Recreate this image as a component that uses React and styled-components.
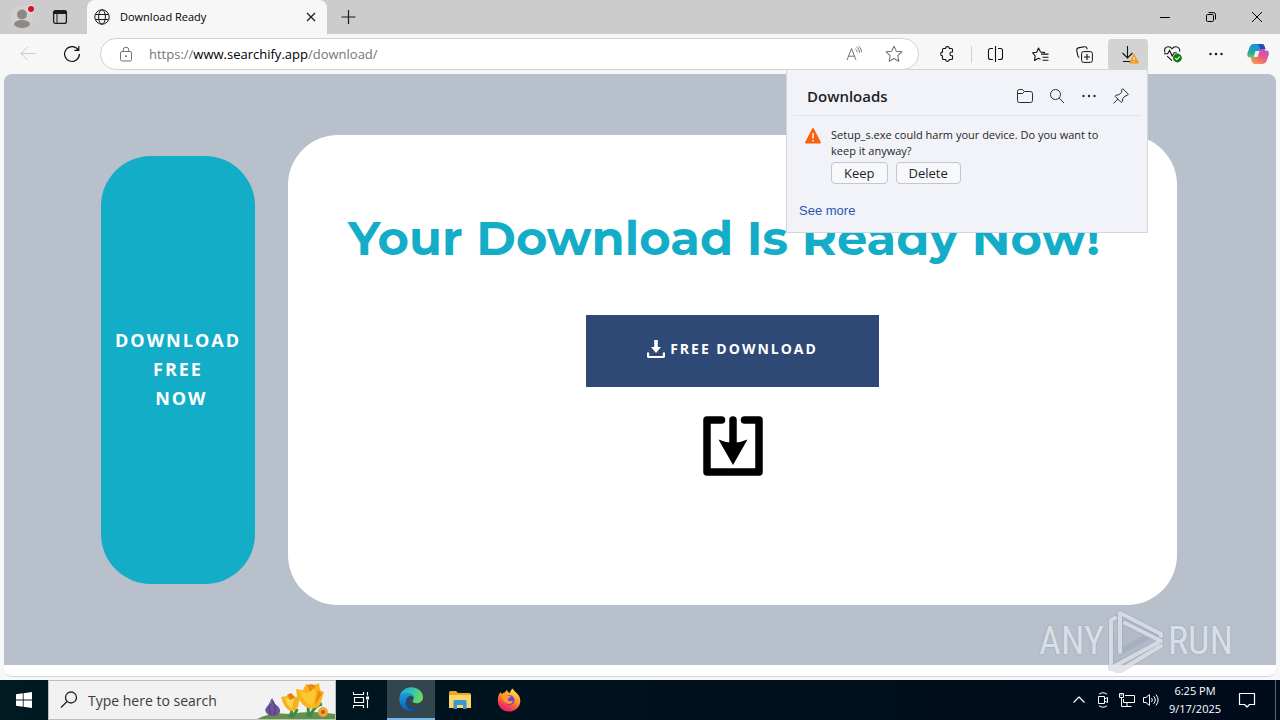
import React from "react";
import styled, { createGlobalStyle, css } from "styled-components";

const App = () => {
  return (
    <Desktop>
      <GlobalStyle />
      <TabStrip />
      <Toolbar />
      <Viewport>
        <DownloadPage />
        <Watermark />
      </Viewport>
      <Taskbar />
    </Desktop>
  );
};

//Tabs
const TabStrip = () => (
  <TabBar>
    <TabTool aria-label="Profile">
      <svg width="24" height="24" viewBox="0 0 24 24">
        <circle cx="12" cy="12" r="11" fill="#d3d1cf" />
        <circle cx="12" cy="9.500" r="5" fill="#8d8986" />
        <ellipse cx="12" cy="19" rx="8" ry="4" fill="#8d8986" />
        <circle cx="21" cy="4" r="4" fill="#e3dcdc" />
        <circle cx="21" cy="4" r="3" fill="#d50f25" />
      </svg>
    </TabTool>
    <TabTool aria-label="Workspaces">
      <Line viewBox="0 0 16 16" $size={16}>
        <rect x="1.600" y="1.600" width="12.800" height="12.800" rx="2" strokeWidth="1.300" />
        <path d="M2 2h12v2.500H2z" fill="currentColor" />
        <path d="M5 5v9" />
      </Line>
    </TabTool>
    <Tab>
      <Line viewBox="0 0 16 16" $size={16}>
        <circle cx="8" cy="8" r="7.200" />
        <ellipse cx="8" cy="8" rx="3.400" ry="7.200" />
        <path d="M1.500 5.500h13M1.500 10.500h13" />
      </Line>
      <TabTitle>Download Ready</TabTitle>
      <TabClose aria-label="Close tab">
        <Line viewBox="0 0 10 10" $size={10}>
          <path d="M1 1l8 8M9 1L1 9" strokeWidth="1.200" />
        </Line>
      </TabClose>
    </Tab>
    <NewTab aria-label="New tab">
      <Line viewBox="0 0 14 14" $size={14}>
        <path d="M7.500 0v14M.5 7h14" strokeWidth="1.200" />
      </Line>
    </NewTab>
    <WindowButtons>
      <WindowButton aria-label="Minimize">
        <Line viewBox="0 0 10 10" $size={10}>
          <path d="M0 5.500h10" />
        </Line>
      </WindowButton>
      <WindowButton aria-label="Restore">
        <Line viewBox="0 0 10 10" $size={10}>
          <rect x=".5" y="2.500" width="7" height="7" rx="1.200" />
          <path d="M2.600 .6H7.500a2 2 0 0 1 2 2v4.900" />
        </Line>
      </WindowButton>
      <WindowButton aria-label="Close">
        <Line viewBox="0 0 10 10" $size={10}>
          <path d="M0 0l10 10M10 0L0 10" />
        </Line>
      </WindowButton>
    </WindowButtons>
  </TabBar>
);

//Address bar and its buttons
const Toolbar = () => (
  <ToolbarRow>
    <ToolButton aria-label="Back" $faded>
      <Line viewBox="0 0 16 16" $size={16}>
        <path d="M15.500 7.500H1M7.500 1L1 7.500 7.500 14" />
      </Line>
    </ToolButton>
    <ToolButton aria-label="Refresh">
      <Line viewBox="0 0 18 18" $size={18}>
        <path d="M15.200 5A7.400 7.400 0 1 0 16.400 9M15.800 1v4.400h-4.400" strokeWidth="1.200" />
      </Line>
    </ToolButton>
    <AddressBar>
      <Line viewBox="0 0 16 16" $size={16}>
        <rect x="2.500" y="5.500" width="11" height="9.500" rx="1.600" />
        <path d="M5.200 5.500V4a2.800 2.800 0 0 1 5.600 0v1.500" />
        <circle cx="8" cy="10.200" r=".6" fill="currentColor" />
      </Line>
      <Url href="https://www.searchify.app/download/">
        https://<strong>www.searchify.app</strong>/download/
      </Url>
      <AddressButton aria-label="Read aloud">
        <Line viewBox="0 0 16 16" $size={16}>
          <path d="M1 14L5.500 2.500 10 14M2.600 10.200h5.800M9.500 3c1 .8 1.500 1.800 1.500 3.200M10.500 1c2 1.300 3 3 3 5.700M12.500 .2c2 1.500 3 3.500 3 6" />
        </Line>
      </AddressButton>
      <AddressButton aria-label="Add to favorites">
        <Line viewBox="0 0 16 16" $size={18}>
          <path d="M8 1l2.100 4.500 4.900.6-3.600 3.400.9 4.900L8 12l-4.300 2.400.9-4.900L1 6.100l4.900-.6z" strokeWidth=".9" />
        </Line>
      </AddressButton>
    </AddressBar>
    <ToolButton aria-label="Extensions">
      <Line viewBox="0 0 16 16" $size={16}>
        <path d="M4.500 2.500h2a1.900 1.900 0 0 1 3.800 0h2.200a1 1 0 0 1 1 1V6h-.7a1.900 1.900 0 0 0 0 3.800h.7v2.700a1 1 0 0 1-1 1h-2.200a1.900 1.900 0 0 1-3.800 0h-2a1 1 0 0 1-1-1V9.900a1.900 1.900 0 0 1 0-3.800V3.500a1 1 0 0 1 1-1z" strokeWidth="1.100" />
      </Line>
    </ToolButton>
    <Divider />
    <ToolButton aria-label="Split screen">
      <Line viewBox="0 0 16 16" $size={16}>
        <path d="M7.500 0v16M5 2.500H2.500a2 2 0 0 0-2 2v7a2 2 0 0 0 2 2H5M10 2.500h2.500a2 2 0 0 1 2 2v7a2 2 0 0 1-2 2H10" strokeWidth="1.100" />
      </Line>
    </ToolButton>
    <ToolButton aria-label="Favorites">
      <Line viewBox="0 0 17 16" $size={17}>
        <path d="M8.500 12.800L6.400 11.700 2.500 14l.7-4.500L.7 6.300l4-.6L6.500 1.500l2 4 4.500.6M9 7.600h7.500M10.500 10.700h6M10.500 13.800h6" strokeWidth="1.100" />
      </Line>
    </ToolButton>
    <ToolButton aria-label="Collections">
      <Line viewBox="0 0 17 17" $size={17}>
        <rect x="5.600" y="5.600" width="10.800" height="10.800" rx="2" />
        <path d="M11 8v6M8 11h6M3.400 11.400A2.400 2.400 0 0 1 1.800 9.500L.7 4.300C.5 3 1.200 2.200 2.200 1.900L8.400.8c1.300-.2 2.400.6 2.600 1.700l.2.900" strokeWidth="1.100" />
      </Line>
    </ToolButton>
    <DownloadsAnchor>
      <ToolButton aria-label="Downloads" aria-expanded="true" $active>
        <svg width="22" height="20" viewBox="0 0 22 20">
          <path d="M10.500 2v12M5.500 9l5 5 5-5M6 17.500h7" fill="none" stroke="#111" strokeWidth="1.100" />
          <path d="M17 10.500l4.500 8.500h-9z" fill="#f29a1f" stroke="#f29a1f" strokeLinejoin="round" />
          <path d="M17 13v3M17 17v1.200" stroke="#fff" />
        </svg>
      </ToolButton>
      <DownloadsPanel />
    </DownloadsAnchor>
    <ToolButton aria-label="Browser essentials">
      <svg width="20" height="18" viewBox="0 0 20 18">
        <path d="M3 7.600C1.500 4.300 3.600 1.700 6.300 1.700c1.800 0 3 1 3.700 2.100.7-1.100 1.900-2.100 3.700-2.100 3 0 4.600 2.400 3.900 5M5.200 11.200L10 15.600M2 8.800h3.600l2-3.300 2.600 5.600 2-3.400h2.600" fill="none" stroke="#111" strokeWidth="1.100" />
        <circle cx="15.400" cy="13" r="4.400" fill="#0f7b15" />
        <path d="M13.200 13.100l1.600 1.500 2.900-3" fill="none" stroke="#fff" strokeWidth="1.100" />
      </svg>
    </ToolButton>
    <ToolButton aria-label="Settings and more">
      <Dots />
    </ToolButton>
    <CopilotButton aria-label="Copilot">
      <svg width="24" height="24" viewBox="0 0 24 24">
        <defs>
          <linearGradient id="cpA" x1="0" y1="0" x2="0" y2="1">
            <stop offset="0" stopColor="#138ee8" />
            <stop offset=".5" stopColor="#2aa99b" />
            <stop offset="1" stopColor="#d6cb2b" />
          </linearGradient>
          <linearGradient id="cpB" x1=".8" y1="0" x2=".2" y2="1">
            <stop offset="0" stopColor="#a557e8" />
            <stop offset=".5" stopColor="#e9558d" />
            <stop offset="1" stopColor="#ff9a4a" />
          </linearGradient>
        </defs>
        <path d="M8 2h8c1.800 0 2.300 1.500 2.800 3l.7 2h-3c-1.600 0-2.400.8-2.900 2.400L11.400 17c-.6 2-1.200 3-2.700 3H8c-1.500 0-2-1-2.400-2.500L5 15.500H4C1.500 15.500.8 13.500 1.500 11L3.700 5C4.600 2.900 5.600 2 8 2z" fill="url(#cpA)" />
        <path d="M16 22H8.500c-1.800 0-2.300-1.500-2.800-3L5 16.800h2.800c1.600 0 2.400-.8 2.900-2.400L13 7.500c.6-2 1.300-3 2.800-3h.5c1.500 0 2 1 2.400 2.500l.5 1.500h1c2.500 0 3.200 2 2.500 4.500l-2.200 6c-.8 2.100-2.100 3-4.500 3z" fill="url(#cpB)" />
        <path d="M10.500 2H16c1.800 0 2.300 1.500 2.800 3l.7 2h-3c-1 0-1.700.3-2.200.9L13.500 5c-.5-1.800-1.300-3-3-3z" fill="#1b4fc4" />
        <path d="M9.500 9h4l-1.800 6h-4z" fill="#fff" opacity=".85" />
      </svg>
    </CopilotButton>
  </ToolbarRow>
);

const Dots = () => (
  <svg width="14" height="4" viewBox="0 0 14 4" fill="currentColor">
    <circle cx="1.500" cy="2" r="1.200" />
    <circle cx="7" cy="2" r="1.200" />
    <circle cx="12.500" cy="2" r="1.200" />
  </svg>
);

const DownloadsPanel = () => (
  <Panel>
    <PanelHeader>
      <PanelTitle>Downloads</PanelTitle>
      <PanelButton aria-label="Open downloads folder">
        <Line viewBox="0 0 16 16" $size={16}>
          <path d="M.5 3.500a2 2 0 0 1 2-2h3l2 2h6a2 2 0 0 1 2 2v7a2 2 0 0 1-2 2h-11a2 2 0 0 1-2-2zM.5 5.500h5l2-2" />
        </Line>
      </PanelButton>
      <PanelButton aria-label="Search downloads">
        <Line viewBox="0 0 16 16" $size={16}>
          <circle cx="6.500" cy="6.500" r="5" />
          <path d="M10.200 10.200L15 15" />
        </Line>
      </PanelButton>
      <PanelButton aria-label="More options">
        <Dots />
      </PanelButton>
      <PanelButton aria-label="Pin downloads">
        <Line viewBox="0 0 16 16" $size={16}>
          <path d="M9.800 .7l5.500 5.500-1 1.200-2.200.6-2.400 2.700-.3 2.700-1.200 1-6.100-6.100 1-1.200 2.700-.3L8.500 4.400l.4-2.700zM5.100 10.900L.6 15.400" />
        </Line>
      </PanelButton>
    </PanelHeader>
    <Item>
      <svg width="18" height="18" viewBox="0 0 18 18">
        <path d="M9 2l7 13.500H2z" fill="#f7630c" stroke="#f7630c" strokeWidth="1.800" strokeLinejoin="round" />
        <path d="M9 6v5.500M9 13v1.500" stroke="#fff" strokeWidth="1.400" />
      </svg>
      <div>
        <ItemText>Setup_s.exe could harm your device. Do you want to keep it anyway?</ItemText>
        <ItemActions>
          <PanelAction>Keep</PanelAction>
          <PanelAction>Delete</PanelAction>
        </ItemActions>
      </div>
    </Item>
    <SeeMore href="#downloads">See more</SeeMore>
  </Panel>
);

//Web page
const DownloadPage = () => (
  <Hero>
    <HeroContent>
      <SideButton>
        <span>DOWNLOAD</span>
        <span>FREE</span>
        <span>&nbsp;NOW</span>
      </SideButton>
      <Card>
        <Heading>Your Download Is Ready Now!</Heading>
        <CardBody>
          <FreeButton>
            <svg width="20" height="20" viewBox="0 0 20 20" fill="#fff">
              <path d="M8.200 2h3.600v7H15l-5 6-5-6h3.200z" />
              <path d="M1 14.500h2.200V18h13.600v-3.500H19v4a1.500 1.500 0 0 1-1.500 1.500h-15A1.500 1.500 0 0 1 1 18.500z" />
            </svg>
            FREE DOWNLOAD
          </FreeButton>
          <svg width="60" height="60" viewBox="0 0 60 60">
            <path d="M18.500 4H4v52h52V4H41.500" fill="none" stroke="#000" strokeWidth="7.500" strokeLinecap="round" strokeLinejoin="round" />
            <path d="M30 4v30" stroke="#000" strokeWidth="7.500" strokeLinecap="round" />
            <path d="M15.500 23.500Q30 30 44.500 23.500L30 49z" />
          </svg>
        </CardBody>
      </Card>
    </HeroContent>
  </Hero>
);

const Watermark = () => (
  <Mark>
    <span>ANY</span>
    <svg width="58" height="64" viewBox="0 0 58 64" fill="none" strokeLinejoin="round" strokeLinecap="round">
      <path d="M13 43V4l39 21v4L4 57V11z" fill="#8f98a8" fillOpacity=".12" />
      <g stroke="#8f98a8" strokeOpacity=".3" strokeWidth="6">
        <path d="M13 43V4l41 21v2M8 9L4 11v48l50-27L18 14M8 60l4 2 42-25M13 43l29-16" />
      </g>
      <g stroke="#e3e7ee" strokeOpacity=".75" strokeWidth="4">
        <path d="M13 43V4l41 21v2M8 9L4 11v48l50-27L18 14M8 60l4 2 42-25" />
      </g>
    </svg>
    <span>RUN</span>
  </Mark>
);

//Windows taskbar
const Taskbar = () => (
  <TaskbarRow>
    <TaskButton aria-label="Start">
      <svg width="16" height="16" viewBox="0 0 16 16" fill="#fff">
        <path d="M0 2.300L6.800 1.300v6.300H0zM7.600 1.200L16 0v7.600H7.600zM0 8.400h6.800v6.300L0 13.700zM7.600 8.400H16V16l-8.400-1.200z" />
      </svg>
    </TaskButton>
    <SearchBox>
      <Line viewBox="0 0 18 18" $size={18}>
        <circle cx="11" cy="6.500" r="5.500" strokeWidth="1.300" />
        <path d="M7 10.500L1 16.500" strokeWidth="1.300" />
      </Line>
      <SearchInput aria-label="Search" placeholder="Type here to search" />
      <Flowers />
    </SearchBox>
    <Apps>
      <TaskButton aria-label="Task view">
        <svg width="18" height="18" viewBox="0 0 18 18" fill="none" stroke="#fff" strokeWidth="1.100">
          <path d="M.5 1v2.500h10V1M.5 17v-2.500h10V17M1.500 6.500h9v5h-9zM14.500 1v3.500M14.500 9v8" />
          <path d="M13 5.500h3v3h-3z" fill="#fff" stroke="none" />
        </svg>
      </TaskButton>
      <TaskButton aria-label="Microsoft Edge" $active>
        <EdgeLogo />
      </TaskButton>
      <TaskButton aria-label="File Explorer">
        <svg width="22" height="20" viewBox="0 0 22 20">
          <path d="M0 2.500Q0 1 1.500 1H7l2 2h11.500Q22 3 22 4.500V18H0z" fill="#e9a725" />
          <path d="M0 5h22v13H0z" fill="#fbd768" />
          <path d="M4.500 19v-7.500Q4.500 10 6 10h10q1.500 0 1.500 1.500V19H14v-4H8v4z" fill="#3a95d6" />
        </svg>
      </TaskButton>
      <TaskButton aria-label="Firefox">
        <FirefoxLogo />
      </TaskButton>
    </Apps>
    <TrayButton aria-label="Show hidden icons">
      <Line viewBox="0 0 16 16" $size={16}>
        <path d="M2.500 10.500L8 5l5.500 5.500" strokeWidth="1.200" />
      </Line>
    </TrayButton>
    <TrayButton aria-label="Meet now">
      <Line viewBox="0 0 16 16" $size={16}>
        <path d="M3.500 4.500h6v7h-6zM9.500 7l3-1.500v5L9.500 9M4 2.200C6.500.3 9.500.3 12 2.200M4 13.800c2.500 1.900 5.500 1.900 8 0" />
      </Line>
    </TrayButton>
    <TrayButton aria-label="Network">
      <Line viewBox="0 0 16 16" $size={16}>
        <path d="M6 3.500h9.500v7H4.500V7M.5 1.500h4v4h-4zM2.500 5.500v9H5M8 10.500v4M4.500 14.500h8M1.500 3h2" />
      </Line>
    </TrayButton>
    <TrayButton aria-label="Volume">
      <Line viewBox="0 0 16 16" $size={16}>
        <path d="M.5 5.500H3l3.500-3v11l-3.500-3H.5zM8.500 6a3 3 0 0 1 0 4M10.700 4.200a6 6 0 0 1 0 7.600M13 2.500a9 9 0 0 1 0 11" />
      </Line>
    </TrayButton>
    <Clock>
      <span>6:25 PM</span>
      <span>9/17/2025</span>
    </Clock>
    <TrayButton aria-label="Notifications" $wide>
      <Line viewBox="0 0 16 16" $size={16}>
        <path d="M.5 1.500h15v11h-5L8 15l-2.500-2.500h-5z" strokeWidth="1.200" />
      </Line>
    </TrayButton>
    <ShowDesktop aria-label="Show desktop" />
  </TaskbarRow>
);

const Flowers = () => (
  <svg width="78" height="38" viewBox="4 0 78 38">
    <path d="M4 38Q18 31 37 33 58 29 82 33v5z" fill="#5f9348" />
    <path d="M12 29q2-5 6-7l1-5 3 6q6 4 5 8-1 4-7 4t-8-6z" fill="#70539a" />
    <path d="M19 18q-5 7-1 16M20 20q4 7 1 14" stroke="#4f3a78" fill="none" />
    <path d="M36 36q4-4 2-10M38 36q6-5 6-8M55 36q1-10-1-18M57 36q3-11 12-13" stroke="#3f8b45" strokeWidth="3" fill="none" />
    <path d="M28 16l6-1 3-3 4 4 6-1-2 11q-3 5-8 4-6-3-9-14z" fill="#f6b21e" />
    <path d="M32 16l5 3 4-3-2 12-5-5z" fill="#ffd447" />
    <path d="M34 14l4-2 4 4-4 3z" fill="#e97b15" />
    <path d="M43 8l7 1 3-6 6 2 7-3 1 7 4 2-4 13q-5 5-12 3Q43 21 43 8z" fill="#f8b51c" />
    <path d="M46 9l9 4 3-8 5 7-4 14-7-6z" fill="#fcc935" />
    <path d="M65 9l-3 15 7-11zM54 4l3 7 6-6-4-2z" fill="#ea8a12" />
    <circle cx="70" cy="31" r="5" fill="#f4a53a" />
    <circle cx="70" cy="31" r="2" fill="#b85a14" />
  </svg>
);

const EdgeLogo = () => (
  <svg width="24" height="24" viewBox="0 0 24 24">
    <defs>
      <linearGradient id="edA" x1="0" y1=".2" x2="1" y2=".5">
        <stop offset="0" stopColor="#1fa5df" />
        <stop offset=".5" stopColor="#2fc5b8" />
        <stop offset="1" stopColor="#6fdb58" />
      </linearGradient>
      <linearGradient id="edB" x1="0" y1="0" x2="0" y2="1">
        <stop offset="0" stopColor="#1b9de0" />
        <stop offset="1" stopColor="#0c5fb4" />
      </linearGradient>
    </defs>
    <path d="M.4 10C1.600 4 6.300.2 12 .2c7 0 12 4.800 12 10 0 3.600-2.800 6-6.300 6-2.700 0-4.200-.9-4.200-1.900 0-.8 1.200-1 1.200-3.200 0-2.500-2.500-4.900-6-4.900C4.600 6.200 1.600 8 .4 10z" fill="url(#edA)" />
    <path d="M.3 11.500C.5 8.500 4 6.200 8.700 6.200c3.500 0 6 2.400 6 4.900-1-2-2.700-2.500-4-2.100C7.500 10 6.500 14 8.500 18c1.200 2.600 3.700 4.700 6.500 5.500-1 .3-2 .4-3 .4C5 23.900.1 18.500.3 11.500z" fill="url(#edB)" />
    <path d="M10.200 9.400c-2.200 1.700-2.700 5.300-1 8.600 2.300 4.300 8.300 4.300 12.900 1-1.700 2.600-4.200 4.200-7.100 4.700-3.500 0-8-3-8.500-7.200-.3-3.500 1.200-6.300 3.700-7.100z" fill="#134d91" />
  </svg>
);

const FirefoxLogo = () => (
  <svg width="24" height="24" viewBox="0 0 24 24">
    <defs>
      <linearGradient id="ffA" x1=".8" y1="0" x2=".3" y2="1">
        <stop offset="0" stopColor="#fff04f" />
        <stop offset=".45" stopColor="#ff9422" />
        <stop offset=".8" stopColor="#f8384e" />
        <stop offset="1" stopColor="#e11b80" />
      </linearGradient>
    </defs>
    <path d="M3.500 4c.3 1 .8 1.700 1.400 2C6 5 7 4.600 8 4.600c.4-1.300 1.300-2.300 2.300-2.600-.1 1.500.8 2.300 1.700 2.700h1C13.500 3 14.300 1.500 16 .6c.2 3 5.800 4.400 7 9.900C24.600 17.500 19 23.500 12 23.500S.8 18.500.8 12.500C.8 9 1.800 6 3.500 4z" fill="url(#ffA)" />
    <circle cx="12.500" cy="12.300" r="5" fill="#7442d8" />
    <path d="M4.500 7.500c2-1.500 5-1 6 .3l3.300.4c0 1.300-2.600 1.800-3.100 2.800 0 1.500 1 2.500 3.300 2.100 1.500-.3 2 .5 1.700 1-1 2-4.300 2.800-6.700 1-3-2-3.500-5-4.500-7.600z" fill="#ff9b28" />
  </svg>
);

// STYLING //
const GlobalStyle = createGlobalStyle`
  * {
    box-sizing: border-box;
  }
  body {
    margin: 0;
    background: #f7f7f7;
    font-family: "Open Sans", "Noto Sans", sans-serif;
  }
  button {
    padding: 0;
    border: 0;
    background: none;
    color: inherit;
    font-family: inherit;
  }
`;

const Desktop = styled.div`
  display: flex;
  flex-direction: column;
  min-height: 100vh;
`;

const Line = styled.svg`
  flex: none;
  width: ${({ $size }) => $size}px;
  height: ${({ $size }) => $size}px;
  overflow: visible;
  fill: none;
  stroke: currentColor;
  stroke-linejoin: round;
`;

const centered = css`
  display: flex;
  align-items: center;
  justify-content: center;
`;

const TabBar = styled.header`
  display: flex;
  height: 34px;
  padding-left: 3px;
  background: #cccccc;
  color: #1b1b1b;
`;

const TabTool = styled.button`
  ${centered}
  width: 38px;
`;

const Tab = styled.div`
  display: flex;
  align-items: center;
  gap: 10px;
  width: 240px;
  margin-left: 8px;
  padding: 0 10px 0 7px;
  border-radius: 8px 8px 0 0;
  background: #f7f7f7;
`;

const TabTitle = styled.span`
  flex: 1;
  font-size: 11px;
  line-height: 16px;
  color: #000;
`;

const TabClose = styled.button`
  ${centered}
  width: 12px;
  height: 16px;
`;

const NewTab = styled.button`
  ${centered}
  width: 42px;
`;

const WindowButtons = styled.div`
  display: flex;
  margin-left: auto;
`;

const WindowButton = styled.button`
  ${centered}
  width: 46px;
  color: #000;
`;

const ToolbarRow = styled.nav`
  display: flex;
  align-items: center;
  gap: 4px;
  height: 40px;
  padding: 0 4px 0 8px;
  background: #f7f7f7;
`;

const ToolButton = styled.button`
  ${centered}
  width: 40px;
  height: 31px;
  border-radius: 4px;
  color: ${({ $faded }) => ($faded ? "#c9c9c9" : "#111")};
  background: ${({ $active }) => ($active ? "#d3d3d3" : "none")};
`;

const CopilotButton = styled(ToolButton)`
  width: 36px;
`;

const AddressBar = styled.div`
  display: flex;
  align-items: center;
  flex: 1;
  height: 32px;
  margin: 0 4px;
  padding: 0 4px 0 17px;
  border: 1px solid #d2d2d2;
  border-radius: 16px;
  background: #fff;
  color: #707070;
`;

const Url = styled.a`
  flex: 1;
  margin-left: 15px;
  font-size: 13px;
  color: #767676;
  text-decoration: none;
  strong {
    font-weight: 400;
    color: #000;
  }
`;

const AddressButton = styled.button`
  ${centered}
  width: 40px;
  height: 28px;
`;

const Divider = styled.span`
  width: 1px;
  height: 17px;
  background: #d0d0d0;
`;

const DownloadsAnchor = styled.div`
  position: relative;
`;

const Panel = styled.section`
  position: absolute;
  z-index: 2;
  top: 30px;
  right: 0;
  width: 362px;
  padding: 0 6px 13px;
  border: 1px solid #d3d5da;
  background: #f2f3f8;
  color: #1f1f1f;
`;

const PanelHeader = styled.div`
  display: flex;
  align-items: center;
  height: 46px;
  padding: 8px 4px 0 14px;
  border-bottom: 1px solid #e4e5ea;
`;

const PanelTitle = styled.h2`
  flex: 1;
  margin: 0;
  font-size: 15px;
  font-weight: 600;
`;

const PanelButton = styled.button`
  ${centered}
  width: 32px;
  height: 32px;
  color: #2b2b2b;
`;

const Item = styled.div`
  display: flex;
  align-items: flex-start;
  gap: 9px;
  padding: 11px 24px 0 11px;
  svg {
    flex: none;
  }
`;

const ItemText = styled.p`
  margin: 0;
  font-size: 11px;
  line-height: 16px;
`;

const ItemActions = styled.div`
  display: flex;
  gap: 8px;
  margin-top: 3px;
`;

const PanelAction = styled.button`
  height: 22px;
  padding: 0 12px;
  border: 1px solid #c4c6cc;
  border-radius: 4px;
  background: #f7f8fb;
  font-size: 13px;
  line-height: 20px;
`;

const SeeMore = styled.a`
  display: block;
  margin: 19px 0 0 6px;
  font-family: "Liberation Sans", sans-serif;
  font-size: 13px;
  line-height: 16px;
  color: #2a56b5;
  text-decoration: none;
`;

const Viewport = styled.main`
  position: relative;
  display: flex;
  flex: 1;
  margin: 0 4px 3px;
  padding-bottom: 11px;
  border-bottom: 1px solid #d9d5d7;
  border-radius: 8px;
  background: #fff;
`;

const Hero = styled.div`
  ${centered}
  flex: 1;
  padding: 61px 26px 60px 24px;
  border-radius: 8px 8px 0 0;
  background: #b8c0cc;
`;

const HeroContent = styled.div`
  display: flex;
  align-items: center;
  gap: 33px;
  width: 100%;
  max-width: 1076px;
`;

const SideButton = styled.button`
  ${centered}
  flex-direction: column;
  flex: none;
  width: 154px;
  min-height: 428px;
  padding-bottom: 2px;
  border-radius: 50px;
  background: #13adc7;
  color: #fff;
  font-size: 18px;
  font-weight: 700;
  line-height: 29px;
  letter-spacing: 2px;
`;

const Card = styled.div`
  flex: 1;
  min-height: 470px;
  padding: 74px 60px;
  border-radius: 50px;
  background: #fff;
`;

const Heading = styled.h1`
  margin: 0;
  font-family: Montserrat, Inter, sans-serif;
  font-size: 48px;
  font-weight: 700;
  line-height: 58px;
  color: #13adc7;
`;

const CardBody = styled.div`
  display: flex;
  flex-direction: column;
  align-items: center;
  gap: 29px;
  margin-top: 48px;
`;

const FreeButton = styled.button`
  display: flex;
  align-items: center;
  gap: 4px;
  height: 72px;
  padding: 0 61px 6px 60px;
  background: #2f4977;
  color: #fff;
  font-size: 14px;
  font-weight: 700;
  letter-spacing: 2px;
`;

const Mark = styled.div`
  position: absolute;
  right: 43px;
  bottom: 3px;
  display: flex;
  align-items: center;
  gap: 3px;
  font-family: "Liberation Sans Narrow", "Roboto Condensed", "DejaVu Sans Condensed", sans-serif;
  font-size: 38px;
  line-height: 64px;
  color: rgba(228, 232, 239, 0.9);
  text-shadow: 0 0 2px rgba(120, 130, 145, 0.6);
`;

const TaskbarRow = styled.footer`
  display: flex;
  align-items: stretch;
  height: 40px;
  background: linear-gradient(90deg, #001a22, #00101c 60%, #000b1c);
  color: #fff;
`;

const TaskButton = styled.button`
  ${centered}
  width: 48px;
  background: ${({ $active }) => ($active ? "#33464e" : "none")};
  border-bottom: ${({ $active }) => ($active ? "2px solid #76b9ed" : "0")};
`;

const SearchBox = styled.label`
  display: flex;
  align-items: center;
  width: 288px;
  padding-left: 11px;
  border: 1px solid #bdbdbd;
  background: #f2f2f2;
  color: #222;
  overflow: hidden;
`;

const SearchInput = styled.input`
  flex: 1;
  min-width: 0;
  padding: 0 0 0 10px;
  border: 0;
  background: none;
  font-family: inherit;
  font-size: 14px;
  &::placeholder {
    color: #3b3b3b;
    opacity: 1;
  }
`;

const Apps = styled.div`
  display: flex;
  gap: 1px;
  margin: 0 auto 0 2px;
`;

const TrayButton = styled.button`
  ${centered}
  width: ${({ $wide }) => ($wide ? 40 : 24)}px;
`;

const Clock = styled.time`
  display: flex;
  flex-direction: column;
  align-items: center;
  justify-content: center;
  width: 64px;
  font-size: 11px;
  line-height: 18px;
`;

const ShowDesktop = styled.button`
  width: 5px;
  margin-left: 8px;
  border-left: 1px solid #5c6670;
`;

export default App;
